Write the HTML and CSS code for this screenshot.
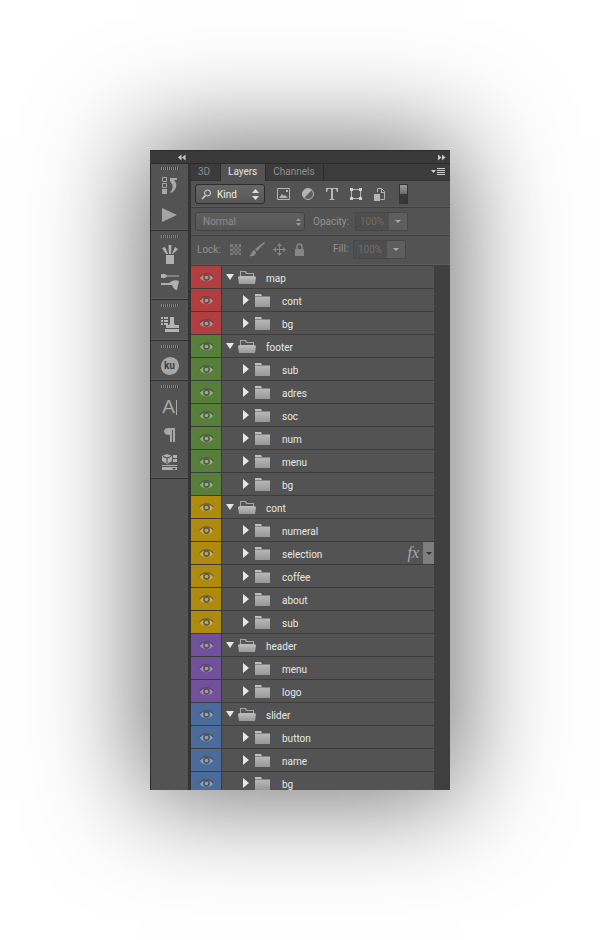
FILE: index.html
```html
<!DOCTYPE html>
<html lang="en">
<head>
<meta charset="utf-8">
<title>Layers panel</title>
<link rel="stylesheet" href="styles.css">
</head>
<body>
<svg class="defs" width="0" height="0">
  <defs>
    <linearGradient id="fold" x1="0" y1="0" x2="0" y2="1"><stop offset="0" stop-color="#c0c0c0"/><stop offset="1" stop-color="#989898"/></linearGradient>
  </defs>
  <symbol id="eye" viewBox="0 0 16 12">
    <path d="M.5 6 C4 .5 12 .5 15.500 6 C12 11.500 4 11.500 .5 6Z" fill="currentColor" fill-opacity=".6"/>
    <path d="M.5 6 C4 .5 12 .5 15.500 6" fill="none" stroke="#2a2a2a" stroke-opacity=".55" stroke-width="1.200"/>
    <circle cx="8" cy="6" r="3.700" fill="#383838" fill-opacity=".7"/>
    <circle cx="8" cy="6" r="1.900" fill="currentColor" fill-opacity=".7"/>
  </symbol>
  <symbol id="folder" viewBox="0 0 15 13">
    <path d="M0 0h6l1 2h8v11H0z" fill="url(#fold)"/>
    <path d="M0 2h15v1H0z" fill="#858585"/>
  </symbol>
  <symbol id="folder-open" viewBox="0 0 18 13">
    <path d="M2 0h6l1 2h7v3H2z" fill="#a6a6a6"/>
    <path d="M3 1h4l1 2h7v2H3z" fill="#565656"/>
    <path d="M2 5h14l2 1-1 7H1L0 6z" fill="url(#fold)"/>
  </symbol>
</svg>

<main class="panel">
  <div class="topbar">
    <div class="topbar-left"><svg class="arrows" viewBox="0 0 9 7"><path d="M4 0v7L0 3.500zM8.500 0v7L4.500 3.500z"/></svg></div>
    <div class="topbar-right"><svg class="arrows" viewBox="0 0 9 7"><path d="M0 0v7l4-3.500zM4.500 0v7l4-3.500z"/></svg></div>
  </div>
  <div class="body">
    <aside class="dock">
      <section class="dock-group group-a">
        <div class="grip"></div>
        <svg class="tool history" width="15" height="17" viewBox="0 0 15 17"><path fill="none" stroke="#a8a8a8" d="M.5.500h4v4h-4zM.5 6.500h4v4h-4z"/><path fill="#a8a8a8" d="M0 12h5v5H0zM8 1h7v2h-3l2 3c1 4-1 8-5 10l-1-1c3-2 3-6 2-8L8 4z"/></svg>
        <svg class="tool play" width="15" height="14" viewBox="0 0 15 14"><path fill="#a4a4a4" d="M0 0l15 7-15 7z"/></svg>
      </section>
      <section class="dock-group group-b">
        <div class="grip"></div>
        <svg class="tool" width="16" height="19" viewBox="0 0 16 19"><path fill="#b0b0b0" d="M4 10h8v9H4zM0 3l3-1 3 7H4zM6.500 0h3L9 9H7zM13 2l3 2-5 5h-1z"/></svg>
        <svg class="tool" width="18" height="16" viewBox="0 0 18 16"><path fill="#b0b0b0" d="M0 0h4l2 1.500 12 0v1H6L4 4H0zM0 9h8l3-2c2-1 5-1 7 0l-2 9c-2 0-4-2-5-5H0z"/></svg>
      </section>
      <section class="dock-group group-c">
        <div class="grip"></div>
        <svg class="tool" width="18" height="15" viewBox="0 0 18 15"><path fill="#b4b4b4" d="M0 0h2v2H0zM3 0h4v2H3zM0 3h2v2H0zM3 3h4v2H3zM0 6h2v2H0zM3 6h4v2H3zM9 0h4v6l1 2h4v3H5V8h3l1-2zM4 12h14v3H4z"/></svg>
      </section>
      <section class="dock-group group-d">
        <div class="grip"></div>
        <div class="ku">ku</div>
      </section>
      <section class="dock-group group-e">
        <div class="grip"></div>
        <div class="glyph-a"><span class="big-a">A</span><span class="caret-bar"></span></div>
        <svg class="tool" width="11" height="14" viewBox="0 0 11 14"><path fill="#a8a8a8" d="M5 0h6v14H9V2H8v12H6V7C2 7 0 6 0 3.500S2 0 5 0z"/></svg>
        <svg class="tool" width="15" height="16" viewBox="0 0 15 16"><path fill="#b0b0b0" d="M5 0l5 2v5l-5 3-5-3V2zM11 1h4v3h-4zM11 5h4v3h-4zM0 11h15v1H0zM0 13h15v3H0z"/><path fill="none" stroke="#444" d="M5 3.500V9.500M1 2.500l4 1.500 4-1.500"/><path fill="#444" d="M10 14h4l-2 2z"/></svg>
      </section>
    </aside>

    <section class="layers">
      <nav class="tabs">
        <span class="tab tab-3d">3D</span>
        <span class="tab tab-active">Layers</span>
        <span class="tab">Channels</span>
        <svg class="panel-menu" width="14" height="8" viewBox="0 0 14 8"><path fill="#d0d0d0" d="M0 2h5L2.500 5zM6 0h8v1H6zM6 2h8v1H6zM6 4h8v1H6zM6 6h8v1H6z"/></svg>
      </nav>

      <div class="opt filter-row">
        <div class="kind">
          <svg width="11" height="11" viewBox="0 0 11 11"><circle cx="6.500" cy="4" r="3" fill="none" stroke="#d8d8d8"/><path d="M4.500 6.500L1 10" stroke="#d8d8d8" stroke-width="1.500"/></svg>
          <span class="kind-label">Kind</span>
          <svg class="updown light" width="7" height="11" viewBox="0 0 7 11"><path d="M3.500 0L7 4H0zM0 7h7l-3.500 4z"/></svg>
        </div>
        <div class="filters">
          <svg width="13" height="12" viewBox="0 0 13 12"><path fill="none" stroke="#b4b4b4" d="M.5.500h12v11H.5z"/><path fill="#b4b4b4" d="M2 10l3-4 2 2 1-1 3 3zM9 2h2v2H9z"/></svg>
          <svg width="12" height="12" viewBox="0 0 12 12"><circle cx="6" cy="6" r="5.500" fill="#5e5e5e" stroke="#b4b4b4"/><path fill="#b4b4b4" d="M2.100 9.900 A5.500 5.500 0 0 1 9.900 2.100z"/></svg>
          <svg width="12" height="12" viewBox="0 0 12 12"><path fill="#b8b8b8" d="M0 0h12v4h-1l-1-3H7v10h1.500v1h-5v-1H5V1H2L1 4H0z"/></svg>
          <svg width="12" height="12" viewBox="0 0 12 12"><path fill="none" stroke="#b4b4b4" d="M1.500 1.500h9v9h-9z"/><path fill="#d0d0d0" d="M0 0h3v3H0zM9 0h3v3H9zM0 9h3v3H0zM9 9h3v3H9z"/></svg>
          <svg width="11" height="13" viewBox="0 0 11 13"><path fill="none" stroke="#b4b4b4" d="M3.500 4V.5h4l3 3v8h-4"/><path fill="#b4b4b4" d="M7 1h1v3h3v1H7zM0 6h6v7H0z"/></svg>
        </div>
        <div class="toggle"><span class="toggle-on"></span><span class="toggle-off"></span></div>
      </div>

      <div class="opt mode-row">
        <div class="blend">
          <span class="blend-label">Normal</span>
          <svg class="updown dim" width="5" height="8" viewBox="0 0 5 8"><path d="M2.500 0L5 3H0zM0 5h5L2.500 8z"/></svg>
        </div>
        <span class="opt-label opacity-label">Opacity:</span>
        <div class="value-box"><span class="value">100%</span><span class="value-btn"><i class="tri-down"></i></span></div>
      </div>

      <div class="opt lock-row">
        <span class="opt-label lock-label">Lock:</span>
        <div class="locks">
          <svg width="11" height="11" viewBox="0 0 11 11"><path fill="#7c7c7c" d="M0 0h11v11H0z"/><path fill="#5a5a5a" d="M3 0h2v3H3zM7 0h2v3H7zM0 3h3v2H0zM5 3h2v2H5zM9 3h2v2H9zM3 5h2v2H3zM7 5h2v2H7zM0 7h3v2H0zM5 7h2v2H5zM9 7h2v2H9zM3 9h2v2H3zM7 9h2v2H7z"/></svg>
          <svg width="16" height="15" viewBox="0 0 16 15"><path fill="#8a8a8a" d="M15 0l1 1-8 8-2-2zM5 8l2 2c0 3-3 5-7 4 2-1 2-2 3-4z"/></svg>
          <svg width="13" height="13" viewBox="0 0 13 13"><path fill="none" stroke="#868686" d="M6.500 1v11M1 6.500h11"/><path fill="#868686" d="M6.500 0L9 3H4zM6.500 13L4 10h5zM0 6.500L3 4v5zM13 6.500L10 9V4z"/></svg>
          <svg width="11" height="13" viewBox="0 0 11 13"><path fill="none" stroke="#868686" stroke-width="1.500" d="M3 6V3.500a2.500 2.500 0 0 1 5 0V6"/><path fill="#868686" d="M1 6h9v7H1z"/></svg>
        </div>
        <span class="opt-label fill-label">Fill:</span>
        <div class="value-box"><span class="value">100%</span><span class="value-btn"><i class="tri-down"></i></span></div>
      </div>

      <div class="list">
        <div class="rows">
          <div class="row c-red group"><div class="vis"><svg><use href="#eye"/></svg></div><i class="tri-open"></i><svg width="18" height="13"><use href="#folder-open"/></svg><span class="name">map</span></div>
          <div class="row c-red"><div class="vis"><svg><use href="#eye"/></svg></div><i class="tri-closed"></i><svg width="15" height="13"><use href="#folder"/></svg><span class="name">cont</span></div>
          <div class="row c-red"><div class="vis"><svg><use href="#eye"/></svg></div><i class="tri-closed"></i><svg width="15" height="13"><use href="#folder"/></svg><span class="name">bg</span></div>

          <div class="row c-green group"><div class="vis"><svg><use href="#eye"/></svg></div><i class="tri-open"></i><svg width="18" height="13"><use href="#folder-open"/></svg><span class="name">footer</span></div>
          <div class="row c-green"><div class="vis"><svg><use href="#eye"/></svg></div><i class="tri-closed"></i><svg width="15" height="13"><use href="#folder"/></svg><span class="name">sub</span></div>
          <div class="row c-green"><div class="vis"><svg><use href="#eye"/></svg></div><i class="tri-closed"></i><svg width="15" height="13"><use href="#folder"/></svg><span class="name">adres</span></div>
          <div class="row c-green"><div class="vis"><svg><use href="#eye"/></svg></div><i class="tri-closed"></i><svg width="15" height="13"><use href="#folder"/></svg><span class="name">soc</span></div>
          <div class="row c-green"><div class="vis"><svg><use href="#eye"/></svg></div><i class="tri-closed"></i><svg width="15" height="13"><use href="#folder"/></svg><span class="name">num</span></div>
          <div class="row c-green"><div class="vis"><svg><use href="#eye"/></svg></div><i class="tri-closed"></i><svg width="15" height="13"><use href="#folder"/></svg><span class="name">menu</span></div>
          <div class="row c-green"><div class="vis"><svg><use href="#eye"/></svg></div><i class="tri-closed"></i><svg width="15" height="13"><use href="#folder"/></svg><span class="name">bg</span></div>

          <div class="row c-yellow group"><div class="vis"><svg><use href="#eye"/></svg></div><i class="tri-open"></i><svg width="18" height="13"><use href="#folder-open"/></svg><span class="name">cont</span></div>
          <div class="row c-yellow"><div class="vis"><svg><use href="#eye"/></svg></div><i class="tri-closed"></i><svg width="15" height="13"><use href="#folder"/></svg><span class="name">numeral</span></div>
          <div class="row c-yellow"><div class="vis"><svg><use href="#eye"/></svg></div><i class="tri-closed"></i><svg width="15" height="13"><use href="#folder"/></svg><span class="name">selection</span><span class="fx">fx</span><span class="fx-btn"><i class="tri-down"></i></span></div>
          <div class="row c-yellow"><div class="vis"><svg><use href="#eye"/></svg></div><i class="tri-closed"></i><svg width="15" height="13"><use href="#folder"/></svg><span class="name">coffee</span></div>
          <div class="row c-yellow"><div class="vis"><svg><use href="#eye"/></svg></div><i class="tri-closed"></i><svg width="15" height="13"><use href="#folder"/></svg><span class="name">about</span></div>
          <div class="row c-yellow"><div class="vis"><svg><use href="#eye"/></svg></div><i class="tri-closed"></i><svg width="15" height="13"><use href="#folder"/></svg><span class="name">sub</span></div>

          <div class="row c-violet group"><div class="vis"><svg><use href="#eye"/></svg></div><i class="tri-open"></i><svg width="18" height="13"><use href="#folder-open"/></svg><span class="name">header</span></div>
          <div class="row c-violet"><div class="vis"><svg><use href="#eye"/></svg></div><i class="tri-closed"></i><svg width="15" height="13"><use href="#folder"/></svg><span class="name">menu</span></div>
          <div class="row c-violet"><div class="vis"><svg><use href="#eye"/></svg></div><i class="tri-closed"></i><svg width="15" height="13"><use href="#folder"/></svg><span class="name">logo</span></div>

          <div class="row c-blue group"><div class="vis"><svg><use href="#eye"/></svg></div><i class="tri-open"></i><svg width="18" height="13"><use href="#folder-open"/></svg><span class="name">slider</span></div>
          <div class="row c-blue"><div class="vis"><svg><use href="#eye"/></svg></div><i class="tri-closed"></i><svg width="15" height="13"><use href="#folder"/></svg><span class="name">button</span></div>
          <div class="row c-blue"><div class="vis"><svg><use href="#eye"/></svg></div><i class="tri-closed"></i><svg width="15" height="13"><use href="#folder"/></svg><span class="name">name</span></div>
          <div class="row c-blue"><div class="vis"><svg><use href="#eye"/></svg></div><i class="tri-closed"></i><svg width="15" height="13"><use href="#folder"/></svg><span class="name">bg</span></div>
        </div>
        <div class="scrollbar"></div>
      </div>
    </section>
  </div>
</main>
</body>
</html>
```

FILE: styles.css
```css
html, body { margin: 0; padding: 0; }
body {
  width: 600px;
  height: 940px;
  overflow: hidden;
  background: #fff;
  padding-top: 150px;
  box-sizing: border-box;
  font-family: Roboto, "Open Sans", sans-serif;
  font-size: 10px;
}
.defs { position: absolute; }
svg { display: block; flex: none; }

.panel {
  width: 300px;
  height: 640px;
  margin: 0 auto;
  background: #535353;
  box-shadow: 0 0 100px 10px rgba(0,0,0,.55);
  overflow: hidden;
  display: flex;
  flex-direction: column;
}

.topbar {
  height: 14px;
  box-sizing: border-box;
  flex: none;
  background: #3a3a3a;
  border-top: 1px solid #2b2b2b;
  border-bottom: 1px solid #2a2a2a;
  display: flex;
}
.topbar-left { width: 36px; display: flex; justify-content: flex-end; align-items: center; }
.topbar-right { flex: 1; padding-right: 4px; display: flex; justify-content: flex-end; align-items: center; }
.arrows { width: 8px; height: 7px; fill: #c8c8c8; }

.body { flex: 1; min-height: 0; display: flex; background: #333; }

.dock {
  width: 37px;
  flex: none;
  margin-right: 3px;
  background: #535353;
  border-left: 1px solid #2c2c2c;
}
.dock-group {
  box-sizing: border-box;
  border-bottom: 1px solid #2e2e2e;
  box-shadow: inset 0 -1px 0 #5e5e5e;
  display: flex;
  flex-direction: column;
  align-items: center;
}
.grip {
  width: 18px;
  height: 3px;
  margin: 4px 0 7px;
  background: repeating-linear-gradient(90deg, #8a8a8a 0 1px, #3c3c3c 1px 2px);
  flex: none;
}
.group-a { height: 67px; }
.group-a .grip { margin: 3px 0 7px; }
.group-a .history { margin: 0 0 14px; }
.group-b { height: 69px; }
.group-b .tool { margin-bottom: 10px; }
.group-c { height: 41px; }
.group-c .grip { margin-bottom: 10px; }
.group-d { height: 40px; }
.group-d .grip { margin-bottom: 9px; }
.ku {
  width: 18px;
  height: 18px;
  border-radius: 50% 48% 52% 46%;
  background: #a6a6a6;
  color: #3f3f3f;
  font-weight: 700;
  font-size: 10px;
  line-height: 18px;
  text-align: center;
}
.group-e { height: 98px; }
.group-e .tool { margin-bottom: 12px; }
.glyph-a { display: flex; align-items: center; height: 16px; margin: 4px 0 13px; }
.big-a { font-size: 19px; line-height: 16px; color: #a8a8a8; font-family: "Liberation Sans", sans-serif; }
.caret-bar { width: 1px; height: 15px; background: #a8a8a8; margin-left: 1px; }

.layers { flex: 1; min-width: 0; display: flex; flex-direction: column; background: #535353; }

.tabs {
  height: 17px;
  flex: none;
  display: flex;
  align-items: stretch;
  background: #3c3c3c;
  border-bottom: 1px solid #333;
  box-sizing: border-box;
  position: relative;
}
.tab {
  padding: 0 8px 0 7px;
  line-height: 16px;
  color: #8f8f8f;
  border-right: 1px solid #2b2b2b;
}
.tab-3d { width: 14px; }
.tab-active { background: #535353; color: #e4e4e4; margin-bottom: -1px; }
.panel-menu { position: absolute; right: 5px; top: 4px; }

.opt { display: flex; align-items: center; flex: none; box-sizing: border-box; border-bottom: 1px solid #3f3f3f; box-shadow: inset 0 -1px 0 #5b5b5b; padding-left: 4px; }
.filter-row { height: 27px; }
.mode-row { height: 28px; }
.lock-row { height: 30px; padding-bottom: 3px; }

.kind {
  width: 70px;
  height: 20px;
  box-sizing: border-box;
  border: 1px solid #2c2c2c;
  border-radius: 3px;
  background: linear-gradient(#666, #585858);
  display: flex;
  align-items: center;
  padding: 0 5px;
  color: #ededed;
}
.kind-label { flex: 1; padding-left: 5px; }
.updown.light { fill: #e0e0e0; }
.updown.dim { fill: #999; }

.filters { display: flex; align-items: center; gap: 12px; margin-left: 12px; }
.toggle { width: 7px; height: 18px; margin-left: 14px; display: flex; flex-direction: column; border: 1px solid #333; }
.toggle-on { flex: 1; background: linear-gradient(#9a9a9a, #6a6a6a); }
.toggle-off { flex: 1; background: #383838; }

.blend {
  width: 110px;
  height: 19px;
  box-sizing: border-box;
  border: 1px solid #444;
  border-radius: 3px;
  background: linear-gradient(#5f5f5f, #565656);
  display: flex;
  align-items: center;
  padding: 0 3px 0 7px;
  color: #8d8d8d;
}
.blend-label { flex: 1; }

.opt-label { color: #929292; }
.opacity-label { margin-left: 8px; width: 36px; margin-top: -1px; }
.lock-label { margin-left: 2px; width: 23px; }
.value-box {
  width: 53px;
  height: 19px;
  box-sizing: border-box;
  border: 1px solid #474747;
  border-radius: 2px;
  display: flex;
  margin-left: 6px;
  background: #4e4e4e;
}
.value { flex: 1; color: #6d6d6d; line-height: 17px; padding-left: 4px; }
.value-btn { width: 18px; flex: none; background: #5e5e5e; display: flex; align-items: center; justify-content: center; }
.tri-down { width: 0; height: 0; border: 3px solid transparent; border-top: 3px solid #a8a8a8; border-bottom: 0; display: block; }

.locks { display: flex; align-items: center; gap: 8px; margin-left: 10px; }
.fill-label { margin-left: 28px; width: 14px; margin-top: -1px; }

.list { flex: 1; min-height: 0; display: flex; overflow: hidden; }
.rows { flex: 1; min-width: 0; }
.scrollbar { width: 16px; flex: none; background: #3f3f3f; }

.row {
  height: 23px;
  box-sizing: border-box;
  border-bottom: 1px solid #3b3b3b;
  display: flex;
  align-items: center;
  color: #e8e8e8;
  font-size: 10px;
}
.vis { width: 30px; height: 22px; flex: none; display: flex; align-items: center; justify-content: center; border-right: 1px solid #3b3b3b; }
.vis svg { width: 15px; height: 11px; }
.tri-open { width: 0; height: 0; margin-left: 4px; margin-right: 4px; border-left: 4.500px solid transparent; border-right: 4.500px solid transparent; border-top: 6px solid #e6e6e6; flex: none; }
.tri-closed { width: 0; height: 0; margin-left: 21px; margin-right: 6px; border-top: 5px solid transparent; border-bottom: 5px solid transparent; border-left: 6px solid #e6e6e6; flex: none; }
.name { margin-left: 12px; margin-top: 2px; }
.group .name { margin-left: 10px; }
.fx { margin-left: auto; font: italic 16px "Liberation Serif", serif; color: #a8a8a8; margin-right: 4px; }
.fx-btn { width: 11px; height: 22px; background: #7e7e7e; display: flex; align-items: center; justify-content: center; }
.fx-btn .tri-down { border-top-color: #333; }

.c-red .vis { background: #b13f3f; color: #e4b4b4; }
.c-green .vis { background: #577f3b; color: #bcd0ac; }
.c-yellow .vis { background: #ae8a0e; color: #dcc988; }
.c-violet .vis { background: #71519b; color: #c4b4d8; }
.c-blue .vis { background: #4b6b9b; color: #b4c4d8; }
```
